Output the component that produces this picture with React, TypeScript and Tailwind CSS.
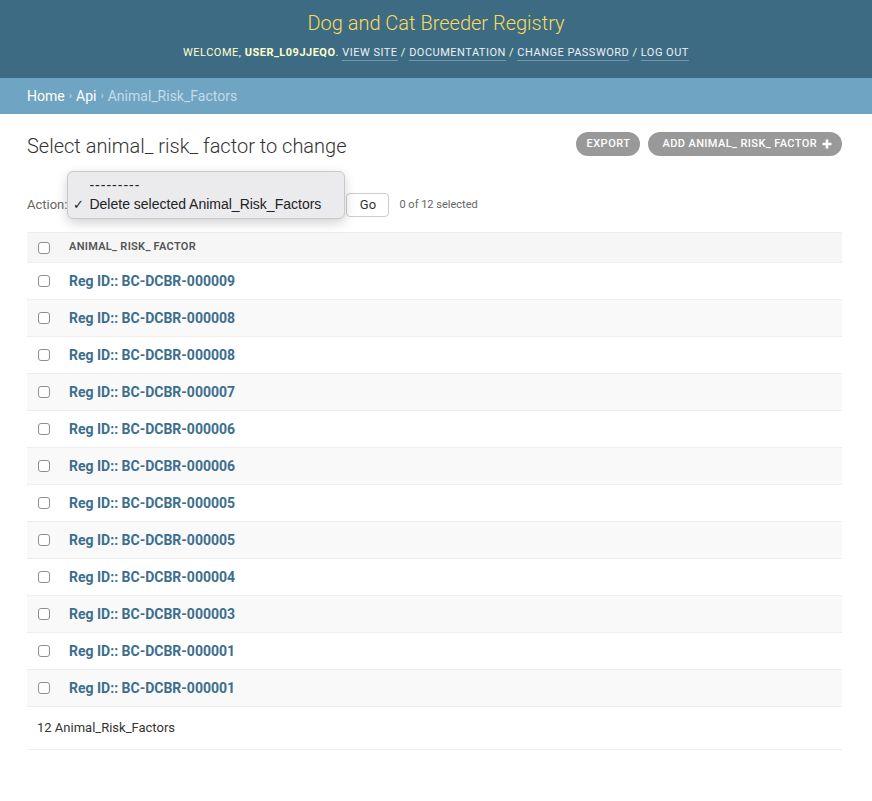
import React from 'react';

const rows = [
  '000009',
  '000008',
  '000008',
  '000007',
  '000006',
  '000006',
  '000005',
  '000005',
  '000004',
  '000003',
  '000001',
  '000001',
];

const Checkbox: React.FC = () => (
  <input
    type="checkbox"
    className="appearance-none block w-[12px] h-[12px] rounded-[3px] border border-[#8f8f8f] bg-white"
  />
);

const Header: React.FC = () => (
  <div className="bg-[#3d6b83] h-[78px] flex flex-col items-center pt-[10px]">
    <div className="text-[20px] font-light leading-[26px] text-[#f5dd5d]">
      Dog and Cat Breeder Registry
    </div>
    <div className="mt-[8px] text-[11px] tracking-[0.5px] uppercase text-[#ffffcc] leading-[18px]">
      Welcome, <strong className="font-bold">user_L09JJEQO</strong>.{' '}
      <a className="text-white/90 border-b border-white/30 pb-[1px]">View site</a> /{' '}
      <a className="text-white/90 border-b border-white/30 pb-[1px]">Documentation</a> /{' '}
      <a className="text-white/90 border-b border-white/30 pb-[1px]">Change password</a> /{' '}
      <a className="text-white/90 border-b border-white/30 pb-[1px]">Log out</a>
    </div>
  </div>
);

const Breadcrumbs: React.FC = () => (
  <div className="bg-[#6fa5c2] h-[36px] flex items-center px-[27px] text-[14px] text-[#c4dce8]">
    <a className="text-white">Home</a>
    <span className="mx-[4px] text-[11px]">›</span>
    <a className="text-white">Api</a>
    <span className="mx-[4px] text-[11px]">›</span>
    <span>Animal_Risk_Factors</span>
  </div>
);

const Actions: React.FC = () => (
  <div className="flex items-center h-[24px] mt-[33px] text-[13px] text-[#666]">
    <span>Action:</span>
    <div className="relative ml-[4px] w-[271px] h-[24px]">
      <div className="absolute left-[4px] right-[10px] bottom-0 h-[2px] bg-[#7aa0d8] rounded-full" />
      <div
        className="absolute left-[-4px] top-[-22px] w-[278px] h-[48px] rounded-[6px] border border-[#c9c9cc] bg-[#ebebee] shadow-[0_4px_12px_rgba(0,0,0,0.18)] text-[14px] text-[#222] pl-[5px] pt-[4px]"
        style={{ fontFamily: '"Liberation Sans", Arial, sans-serif' }}
      >
        <div className="pl-[16px] leading-[19px] tracking-[1px]">---------</div>
        <div className="flex items-center leading-[19px]">
          <span className="w-[16px] text-[13px]">✓</span>
          <span>Delete selected Animal_Risk_Factors</span>
        </div>
      </div>
    </div>
    <button className="ml-[4px] h-[24px] w-[43px] border border-[#ccc] rounded-[4px] bg-white text-[13px] text-[#333]">
      Go
    </button>
    <span className="ml-[10px] text-[11px]">0 of 12 selected</span>
  </div>
);

export default function App() {
  return (
    <div
      className="min-h-[801px] bg-white text-[#333]"
      style={{ fontFamily: 'Roboto, "Liberation Sans", sans-serif' }}
    >
      <Header />
      <Breadcrumbs />
      <div className="pl-[27px] pr-[30px] pt-[18px]">
        <div className="flex justify-between items-start">
          <h1 className="text-[20px] font-light leading-[28px] text-[#333]">
            Select animal_ risk_ factor to change
          </h1>
          <div className="flex gap-[8px] mt-0">
            <a className="h-[24px] px-[10px] flex items-center rounded-full bg-[#999] text-white text-[11px] font-medium tracking-[0.5px] uppercase">
              Export
            </a>
            <a className="h-[24px] pl-[14px] pr-[10px] flex items-center gap-[5px] rounded-full bg-[#999] text-white text-[11px] font-medium tracking-[0.4px] uppercase">
              Add animal_ risk_ factor
              <svg width="10" height="10" viewBox="0 0 10 10">
                <path d="M5 0.5v9M0.5 5h9" stroke="white" strokeWidth="2.6" />
              </svg>
            </a>
          </div>
        </div>

        <Actions />

        <table className="w-full mt-[15px] border-collapse">
          <thead>
            <tr className="bg-[#f6f6f6] border-t border-b border-[#eee] h-[30px]">
              <th className="w-[42px] pl-[11px] align-middle">
                <Checkbox />
              </th>
              <th className="text-left text-[11px] font-semibold text-[#555] tracking-[0.3px] uppercase align-middle">
                Animal_ risk_ factor
              </th>
            </tr>
          </thead>
          <tbody>
            {rows.map((id, i) => (
              <tr
                key={i}
                className={`h-[37px] border-b border-[#eee] ${i % 2 === 1 ? 'bg-[#f9f9f9]' : 'bg-white'}`}
              >
                <td className="pl-[11px] align-middle">
                  <Checkbox />
                </td>
                <td className="align-middle">
                  <a className="text-[14px] font-bold text-[#3c6e8e]">Reg ID:: BC-DCBR-{id}</a>
                </td>
              </tr>
            ))}
          </tbody>
        </table>
        <div className="h-[43px] flex items-center pl-[10px] border-b border-[#eee] text-[13px] text-[#333]">
          12 Animal_Risk_Factors
        </div>
      </div>
    </div>
  );
}
